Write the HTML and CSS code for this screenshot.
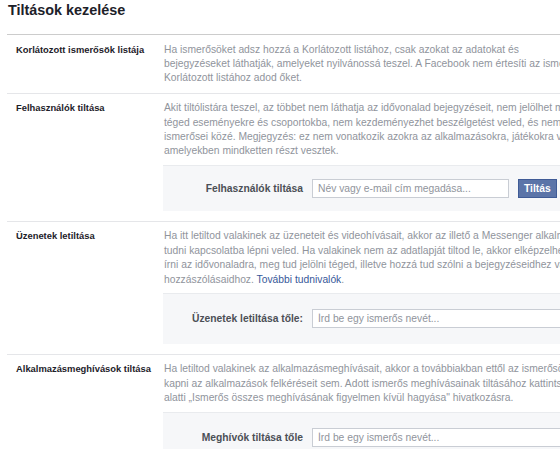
FILE: index.html
```html
<!DOCTYPE html>
<html lang="hu">

<head>
    <meta charset="UTF-8">
    <meta name="viewport" content="width=device-width, initial-scale=1.0">
    <title>Tiltások kezelése</title>
    <link rel="stylesheet" href="styles.css">
</head>

<body>
    <div class="page">
        <h2 class="page-title">Tiltások kezelése</h2>

        <div class="row">
            <div class="row-label">Korlátozott ismerősök listája</div>
            <div class="row-body">
                <p class="row-text">Ha ismerősöket adsz hozzá a Korlátozott listához, csak azokat az adatokat és<br>
                    bejegyzéseket láthatják, amelyeket nyilvánossá teszel. A Facebook nem értesíti az ismerőseidet, ha<br>
                    Korlátozott listához adod őket.</p>
            </div>
        </div>

        <div class="row">
            <div class="row-label">Felhasználók tiltása</div>
            <div class="row-body">
                <p class="row-text">Akit tiltólistára teszel, az többet nem láthatja az idővonalad bejegyzéseit, nem jelölhet meg<br>
                    téged eseményekre és csoportokba, nem kezdeményezhet beszélgetést veled, és nem adhatja hozzá<br>
                    ismerősei közé. Megjegyzés: ez nem vonatkozik azokra az alkalmazásokra, játékokra vagy csoportokra,<br>
                    amelyekben mindketten részt vesztek.</p>
                <div class="block-form">
                    <label class="block-label" for="blockUser">Felhasználók tiltása</label>
                    <input class="block-input block-input-short" id="blockUser" type="text"
                        placeholder="Név vagy e-mail cím megadása...">
                    <button class="block-button">Tiltás</button>
                </div>
            </div>
        </div>

        <div class="row">
            <div class="row-label">Üzenetek letiltása</div>
            <div class="row-body">
                <p class="row-text">Ha itt letiltod valakinek az üzeneteit és videohívásait, akkor az illető a Messenger alkalmazásban sem fog<br>
                    tudni kapcsolatba lépni veled. Ha valakinek nem az adatlapját tiltod le, akkor elképzelhető, hogy tud<br>
                    írni az idővonaladra, meg tud jelölni téged, illetve hozzá tud szólni a bejegyzéseidhez vagy<br>
                    hozzászólásaidhoz. <a href="#" class="row-link">További tudnivalók</a>.</p>
                <div class="block-form block-form-tall">
                    <label class="block-label" for="blockMessages">Üzenetek letiltása tőle:</label>
                    <input class="block-input" id="blockMessages" type="text" placeholder="Írd be egy ismerős nevét...">
                </div>
            </div>
        </div>

        <div class="row">
            <div class="row-label">Alkalmazásmeghívások tiltása</div>
            <div class="row-body">
                <p class="row-text">Ha letiltod valakinek az alkalmazásmeghívásait, akkor a továbbiakban ettől az ismerősödtől nem fogsz<br>
                    kapni az alkalmazások felkéréseit sem. Adott ismerős meghívásainak tiltásához kattints az alábbi neve<br>
                    alatti „Ismerős összes meghívásának figyelmen kívül hagyása" hivatkozásra.</p>
                <div class="block-form block-form-tall">
                    <label class="block-label" for="blockInvites">Meghívók tiltása tőle</label>
                    <input class="block-input" id="blockInvites" type="text" placeholder="Írd be egy ismerős nevét...">
                </div>
            </div>
        </div>
    </div>
</body>

</html>
```

FILE: styles.css
```css
body {
    margin: 0;
    overflow: hidden;
    background-color: #fff;
    font-family: "Liberation Sans", Arial, sans-serif;
    font-size: 9.6px;
    color: #1d2129;
}

.page {
    width: 720px;
    padding-left: 7px;
}

.page-title {
    margin: 0;
    padding: 2px 0 15px 1px;
    font-size: 14.4px;
    line-height: 17px;
    font-weight: bold;
    color: #1d2129;
    border-bottom: 1px solid #ccc;
}

.row {
    display: grid;
    grid-template-columns: 157px 1fr;
    padding: 7.5px 0 7px;
    border-bottom: 1px solid #e5e6e9;
}

.row-label {
    padding-left: 9px;
    font-size: 9.4px;
    font-weight: bold;
    line-height: 14.4px;
    white-space: nowrap;
}

.row-text {
    margin: 0;
    font-size: 10.3px;
    line-height: 14.4px;
    color: #90949c;
    white-space: nowrap;
}

.row-link {
    color: #365899;
    text-decoration: none;
}

.block-form {
    display: flex;
    align-items: center;
    margin: 6.5px 0 2.5px -1px;
    padding: 13px 0;
    background-color: #f6f7f9;
    border-top: 1px solid #e9ebee;
}

.block-form-tall {
    padding: 15px 0 16px;
}

.block-label {
    width: 140px;
    margin-right: 9px;
    text-align: right;
    font-size: 10.3px;
    font-weight: bold;
    color: #4b4f56;
    white-space: nowrap;
}

.block-input {
    box-sizing: border-box;
    width: 300px;
    height: 19px;
    padding: 0 5px;
    border: 1px solid #c9cdd4;
    background-color: #fff;
    font-family: inherit;
    font-size: 10.3px;
    color: #1d2129;
}

.block-input::placeholder {
    color: #90949c;
}

.block-input-short {
    width: 197px;
}

.block-button {
    height: 19px;
    margin-left: 9px;
    padding: 0 5px;
    background-color: #5b74a8;
    border: 1px solid #3f5b96;
    color: #fff;
    font-family: inherit;
    font-size: 10.3px;
    font-weight: bold;
}
```
